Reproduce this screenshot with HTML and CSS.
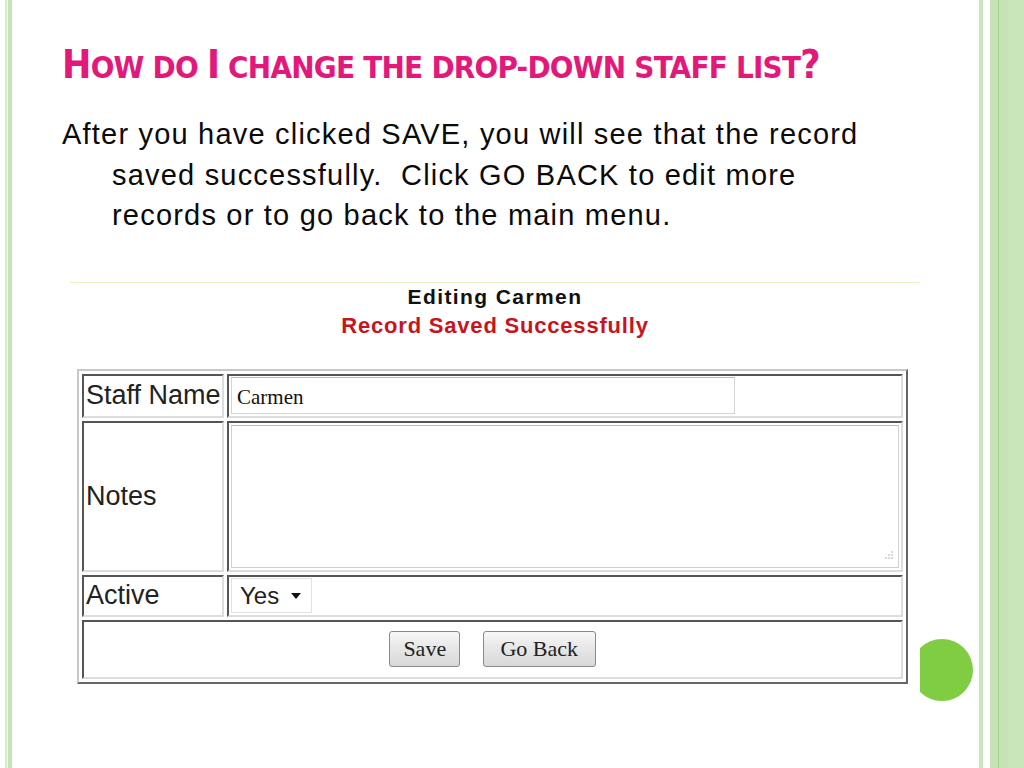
FILE: index.html
```html
<!DOCTYPE html>
<html lang="en">
<head>
    <meta charset="UTF-8">
    <meta name="viewport" content="width=device-width, initial-scale=1.0">
    <title>How do I change the drop-down staff list?</title>
    <link rel="stylesheet" href="styles.css">
</head>
<body>
    <div class="slide">
        <div class="edge-left"></div>
        <main class="content">
            <h1 class="title"><span class="cap">H</span><span class="sc">ow do </span><span class="cap">I</span><span class="sc"> change the drop-down staff list</span><span class="cap">?</span></h1>
            <p class="lead">After you have clicked SAVE, you will see that the record<br>saved successfully.&nbsp; Click GO BACK to edit more<br>records or to go back to the main menu.</p>

            <!-- screenshot of the edit form -->
            <div class="shot">
                <div class="shot-head">
                    <div class="editing">Editing Carmen</div>
                    <div class="saved">Record Saved Successfully</div>
                </div>
                <table class="staff-form">
                    <tr class="row-name">
                        <td class="label">Staff Name</td>
                        <td class="value"><div class="text-input">Carmen</div></td>
                    </tr>
                    <tr class="row-notes">
                        <td class="label">Notes</td>
                        <td class="value">
                            <div class="text-area">
                                <svg class="grip" width="8" height="10" viewBox="0 0 8 10">
                                    <circle cx="7" cy="2" r="0.7" fill="#999"/>
                                    <circle cx="7" cy="5" r="0.7" fill="#999"/>
                                    <circle cx="4" cy="5" r="0.7" fill="#999"/>
                                    <circle cx="7" cy="8" r="0.7" fill="#999"/>
                                    <circle cx="4" cy="8" r="0.7" fill="#999"/>
                                    <circle cx="1" cy="8" r="0.7" fill="#999"/>
                                </svg>
                            </div>
                        </td>
                    </tr>
                    <tr class="row-active">
                        <td class="label">Active</td>
                        <td class="value">
                            <div class="select-box">
                                <span>Yes</span>
                                <svg width="10" height="6" viewBox="0 0 10 6"><path d="M0 0 L10 0 L5 6 Z" fill="#111"/></svg>
                            </div>
                        </td>
                    </tr>
                    <tr class="row-buttons">
                        <td class="buttons" colspan="2">
                            <button class="btn btn-save">Save</button>
                            <button class="btn btn-back">Go Back</button>
                        </td>
                    </tr>
                </table>
            </div>
        </main>
        <div class="edge-right"></div>
        <div class="dot"></div>
    </div>
</body>
</html>
```

FILE: styles.css
```css
* {
    box-sizing: border-box;
}
body {
    margin: 0;
    background-color: #fff;
    font-family: "Liberation Sans", Arial, sans-serif;
}
.slide {
    position: relative;
    display: flex;
    width: 1024px;
    height: 768px;
    overflow: hidden;
}
.edge-left {
    width: 12px;
    background: linear-gradient(to right, #fff 0 5px, #d2eac5 5px 7px, #eef7ea 7px 8px, #c6e4b6 8px 12px);
}
.edge-right {
    width: 45px;
    background: linear-gradient(to right, #cae5bc 0 4px, #fff 4px 11px, #c5e3b5 11px 19px, #a3d08d 19px 20px, #c5e3b5 20px 29px, #c9e6bb 29px);
}
.content {
    flex: 1;
    padding: 41px 0 0 50px;
}
.title {
    margin: 0;
    font-family: "DejaVu Sans Condensed", "Liberation Sans Narrow", sans-serif;
    font-stretch: condensed;
    font-weight: bold;
    font-size: 39px;
    line-height: 48px;
    letter-spacing: -0.75px;
    color: #e2187b;
    text-transform: uppercase;
    white-space: nowrap;
}
.title .sc {
    font-size: 31px;
}
.lead {
    margin: 23px 0 0;
    padding-left: 50px;
    text-indent: -50px;
    font-size: 29px;
    line-height: 40.5px;
    letter-spacing: 1.2px;
    color: #0a0a0a;
    white-space: nowrap;
}
.shot {
    position: relative;
    z-index: 1;
    width: 850px;
    margin: 46px 0 0 8px;
    padding-bottom: 26px;
    background-color: #fff;
    border-top: 1px solid #e6f3c2;
}
.shot-head {
    text-align: center;
    font-weight: bold;
    padding-top: 1px;
}
.editing {
    font-size: 21px;
    line-height: 26px;
    letter-spacing: 1.4px;
    color: #111;
}
.saved {
    font-size: 22px;
    line-height: 32px;
    letter-spacing: 0.8px;
    color: #c8141c;
}
.staff-form {
    margin: 27px 0 0 7px;
    width: 831px;
    border: 2px solid;
    border-color: #c8c8c8 #666 #666 #c8c8c8;
    border-spacing: 3px;
}
.staff-form td {
    padding: 0;
    border: 2px solid;
    border-color: #555 #ddd #ddd #555;
    vertical-align: middle;
}
.label {
    width: 142px;
    padding-left: 2px !important;
    font-size: 27px;
    color: #222;
}
.row-name td { height: 44px; }
.row-notes td { height: 151px; }
.row-active td { height: 42px; }
.row-buttons td { height: 59px; }
.value {
    padding-left: 2px !important;
}
.text-input {
    width: 504px;
    height: 37px;
    padding: 7px 0 0 5px;
    border: 1px solid #d4d4d4;
    border-top-color: #bbb;
    font-family: "Liberation Serif", "Times New Roman", serif;
    font-size: 21px;
    color: #111;
}
.text-area {
    position: relative;
    width: 668px;
    height: 143px;
    border: 1px solid #d0d0d0;
    border-top-color: #bbb;
}
.grip {
    position: absolute;
    right: 5px;
    bottom: 7px;
}
.select-box {
    display: flex;
    align-items: center;
    gap: 12px;
    width: 81px;
    height: 35px;
    padding-left: 8px;
    border: 1px solid #e2e2e2;
    font-size: 24px;
    color: #222;
}
.buttons {
    text-align: center;
}
.btn {
    height: 36px;
    margin: 0 9px;
    padding: 0;
    border: 1px solid #8a8a8a;
    border-radius: 3px;
    background: linear-gradient(#f7f7f7, #e6e6e6 50%, #d8d8d8);
    font-family: "Liberation Serif", "Times New Roman", serif;
    font-size: 22px;
    color: #222;
}
.btn-save {
    width: 71px;
}
.btn-back {
    width: 113px;
}
.dot {
    position: absolute;
    left: 911px;
    top: 639px;
    width: 62px;
    height: 62px;
    border-radius: 50%;
    background-color: #80cc42;
}
```
